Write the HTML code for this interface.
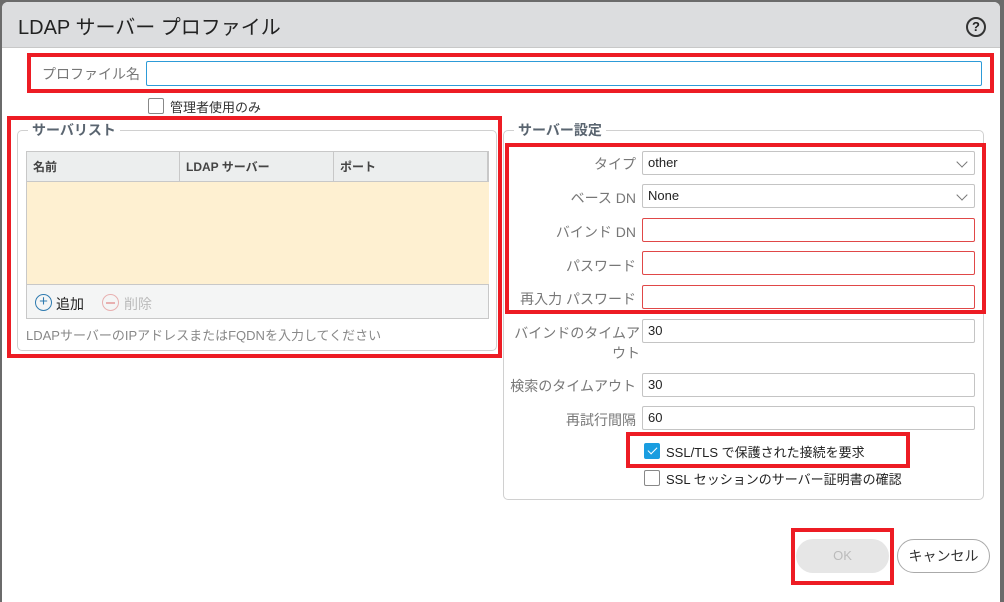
<!DOCTYPE html><html><head><meta charset="utf-8"><style>
*{box-sizing:border-box;margin:0;padding:0}
body{width:1004px;height:593px;background:#6b6b6b;position:relative;overflow:hidden;font-family:"Liberation Sans","Noto Sans CJK JP",sans-serif;font-size:13px;color:#333}
.a{position:absolute}
.dlg{left:2px;top:2px;width:998px;height:600px;background:#fff;border-radius:6px 6px 0 0}
.hdr{left:2px;top:2px;width:998px;height:46px;background:#dcdddf;border-radius:6px 6px 0 0;border-bottom:1px solid #c8c8c8}
.red{border:4px solid #ed1c24}
.inp{border:1px solid #c4c4c4;background:#fff;height:24px;border-radius:2px;padding-left:5px;line-height:22px;font-size:13px;color:#222}
.rinp{border:1px solid #e04848}
.lbl{color:#777;font-size:14px;text-align:right;width:130px}
.fs{border:1px solid #d0d0d0;border-radius:5px}
.leg{background:#fff;padding:0 4px;font-weight:bold;color:#5a6570;font-size:14px}
.cb{width:16px;height:16px;border:1px solid #888;border-radius:2px;background:#fff}
.chev{position:absolute;right:8px;top:6px;width:8px;height:8px;border-right:1px solid #777;border-bottom:1px solid #777;transform:rotate(45deg)}
</style></head><body>
<div class="a dlg"></div>
<div class="a hdr"></div>
<div class="a" style="left:18px;top:11px;font-size:20px;color:#222">LDAP サーバー プロファイル</div>
<div class="a" style="left:966px;top:17px;width:20px;height:20px;border:2px solid #333;border-radius:50%;text-align:center;font-weight:bold;font-size:13px;line-height:16px;color:#222">?</div>

<div class="a red" style="left:27px;top:53px;width:967px;height:40px"></div>
<div class="a" style="left:42px;top:64px;color:#777;font-size:14px">プロファイル名</div>
<div class="a inp" style="left:146px;top:61px;width:836px;height:25px;border-color:#2d9bd8"></div>
<div class="a cb" style="left:148px;top:98px"></div>
<div class="a" style="left:170px;top:97px;font-size:13px">管理者使用のみ</div>

<div class="a red" style="left:7px;top:116px;width:495px;height:242px"></div>
<div class="a fs" style="left:17px;top:130px;width:480px;height:221px"></div>
<div class="a leg" style="left:28px;top:120px">サーバリスト</div>
<div class="a" style="left:26px;top:151px;width:463px;height:168px;border:1px solid #c8c8c8;background:#f4f5f5"></div>
<div class="a" style="left:27px;top:152px;width:461px;height:30px;background:#eceeee;border-bottom:1px solid #c8c8c8"></div>
<div class="a" style="left:179px;top:152px;width:1px;height:30px;background:#c8c8c8"></div>
<div class="a" style="left:333px;top:152px;width:1px;height:30px;background:#c8c8c8"></div>
<div class="a" style="left:487px;top:152px;width:1px;height:30px;background:#c8c8c8"></div>
<div class="a" style="left:33px;top:158px;font-weight:bold;font-size:12px;color:#444">名前</div>
<div class="a" style="left:186px;top:158px;font-weight:bold;font-size:12px;color:#444">LDAP サーバー</div>
<div class="a" style="left:340px;top:158px;font-weight:bold;font-size:12px;color:#444">ポート</div>
<div class="a" style="left:27px;top:182px;width:462px;height:103px;background:#fef0d1;border-bottom:1px solid #c8c8c8"></div>
<div class="a" style="left:35px;top:294px;width:17px;height:17px;border:1.5px solid #2f7bb0;border-radius:50%;color:#2f7bb0;text-align:center;line-height:14px;font-size:15px">+</div>
<div class="a" style="left:56px;top:294px;font-size:14px;color:#222">追加</div>
<div class="a" style="left:102px;top:294px;width:17px;height:17px;border:1.5px solid #e8b0b0;border-radius:50%"></div>
<div class="a" style="left:106px;top:302px;width:9px;height:1.5px;background:#e8b0b0"></div>
<div class="a" style="left:124px;top:294px;font-size:14px;color:#bbb">削除</div>
<div class="a" style="left:26px;top:325px;font-size:13px;color:#888">LDAPサーバーのIPアドレスまたはFQDNを入力してください</div>

<div class="a fs" style="left:503px;top:130px;width:481px;height:370px"></div>
<div class="a leg" style="left:514px;top:120px">サーバー設定</div>
<div class="a red" style="left:505px;top:143px;width:481px;height:171px"></div>

<div class="a lbl" style="left:506px;top:154px">タイプ</div>
<div class="a inp" style="left:642px;top:151px;width:333px">other<span class="chev"></span></div>
<div class="a lbl" style="left:506px;top:188px">ベース DN</div>
<div class="a inp" style="left:642px;top:184px;width:333px">None<span class="chev"></span></div>
<div class="a lbl" style="left:506px;top:222px">バインド DN</div>
<div class="a inp rinp" style="left:642px;top:218px;width:333px"></div>
<div class="a lbl" style="left:506px;top:256px">パスワード</div>
<div class="a inp rinp" style="left:642px;top:251px;width:333px"></div>
<div class="a lbl" style="left:506px;top:289px">再入力 パスワード</div>
<div class="a inp rinp" style="left:642px;top:285px;width:333px"></div>

<div class="a" style="left:510px;top:323px;color:#777;font-size:14px;width:130px;text-align:right;line-height:20px">バインドのタイムアウト</div>
<div class="a inp" style="left:642px;top:319px;width:333px">30</div>
<div class="a lbl" style="left:506px;top:376px">検索のタイムアウト</div>
<div class="a inp" style="left:642px;top:373px;width:333px">30</div>
<div class="a lbl" style="left:506px;top:410px">再試行間隔</div>
<div class="a inp" style="left:642px;top:406px;width:333px">60</div>

<div class="a red" style="left:626px;top:432px;width:284px;height:36px"></div>
<div class="a cb" style="left:644px;top:443px;background:#1a9de0;border-color:#1a9de0"></div>
<div class="a" style="left:650px;top:445px;width:5px;height:9px;border-right:1.5px solid #fff;border-bottom:1.5px solid #fff;transform:rotate(45deg)"></div>
<div class="a" style="left:666px;top:442px;font-size:13px;color:#222">SSL/TLS で保護された接続を要求</div>
<div class="a cb" style="left:644px;top:470px"></div>
<div class="a" style="left:666px;top:469px;font-size:13px;color:#222">SSL セッションのサーバー証明書の確認</div>

<div class="a red" style="left:791px;top:528px;width:103px;height:57px"></div>
<div class="a" style="left:796px;top:539px;width:93px;height:34px;background:#e6e6e6;border-radius:17px;text-align:center;line-height:34px;color:#bbb;font-size:13px">OK</div>
<div class="a" style="left:897px;top:539px;width:93px;height:34px;border:1px solid #aaa;border-radius:17px;text-align:center;line-height:32px;color:#333;font-size:14px;background:#fff">キャンセル</div>
</body></html>
